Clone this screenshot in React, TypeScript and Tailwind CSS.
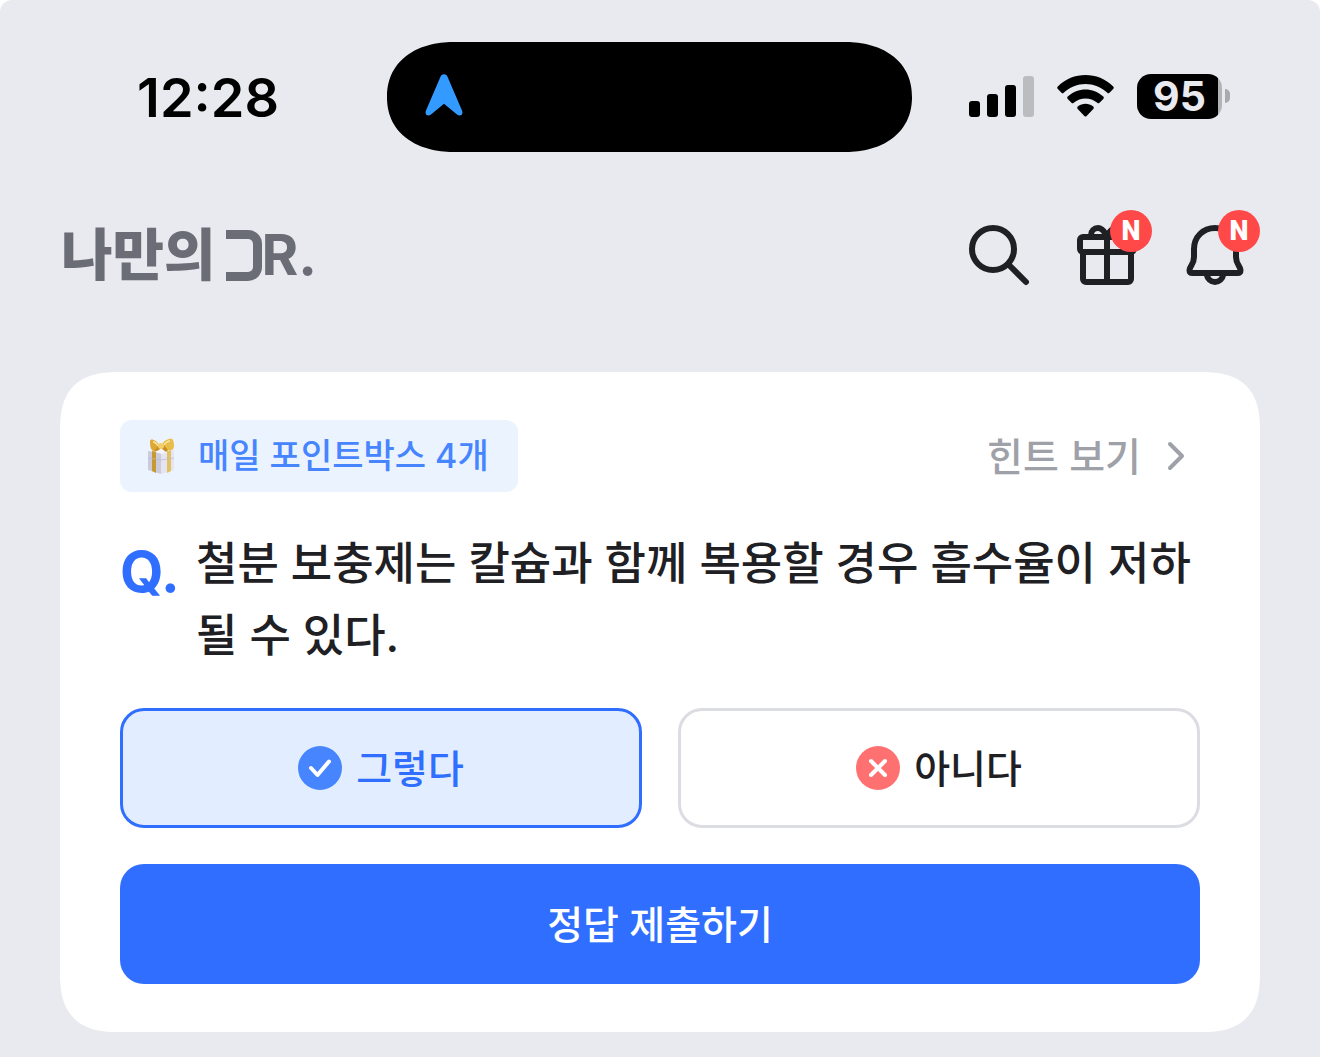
import { useState } from 'react'
import clsx from 'clsx'

type Answer = 'yes' | 'no'

function SignalIcon() {
  return (
    <svg width="65" height="41" viewBox="0 0 65 41" aria-hidden="true">
      <rect x="0" y="25" width="11" height="16" rx="3" />
      <rect x="18" y="18" width="11" height="23" rx="3" />
      <rect x="36" y="9" width="11" height="32" rx="3" />
      <rect x="54" y="0" width="11" height="41" rx="3" fill="#bbbcc0" />
    </svg>
  )
}

function WifiIcon() {
  return (
    <svg width="57" height="42" viewBox="0 0 57 42" aria-hidden="true">
      <path d="M.8 11.5C16-3.8 41-3.8 56.2 11.5q1.2 1.3 0 2.5l-3.7 3.8q-1 1-2.2 0C38 6.2 19 6.2 6.7 17.8q-1.2 1-2.2 0L.8 14q-1.2-1.2 0-2.5Z" />
      <path d="M10.7 21.5C21 12 36 12 46.3 21.5q1.2 1.2 0 2.5l-3.8 3.8q-1 1-2.2 0c-6.8-5.8-16.8-5.8-23.6 0q-1.2 1-2.2 0L10.7 24q-1.2-1.3 0-2.5Z" />
      <path d="M20.7 31.5c4.8-3.7 10.8-3.7 15.6 0q1.2 1.3 0 2.5l-6.7 7q-1.1 1-2.2 0l-6.7-7q-1.2-1.2 0-2.5Z" />
    </svg>
  )
}

function Battery({ level }: { level: number }) {
  return (
    <div className="flex items-center gap-[3px]">
      <div className="flex h-[45px] w-[85px] items-center justify-center rounded-[14px] bg-[linear-gradient(90deg,#000_81px,#b2b3b7_81px)] text-[41px] leading-none font-bold text-[#e9eaef]">
        {level}
      </div>
      <div className="h-[14px] w-[5px] rounded-r-full bg-[#a9aaae]" />
    </div>
  )
}

function StatusBar() {
  return (
    <div className="grid grid-cols-[1fr_525px_1fr] items-center pt-[42px] pr-[21px]">
      <time className="pt-[2px] pr-[108px] text-right text-[54px] leading-none font-semibold text-black">
        12:28
      </time>
      <div className="flex h-[110px] items-center rounded-[68px/55px] bg-black pl-[38px] [corner-shape:superellipse(1.15)]">
        <svg width="38" height="42" viewBox="0 0 38 42" className="mb-1" fill="#339bff" aria-hidden="true">
          <path d="M15.6 2.4C16.8-.6 21.2-.6 22.4 2.4L37 36.5C38.6 40.4 35.6 43 32 40.5L19 29.8 6 40.5C2.4 43-.6 40.4 1 36.5Z" />
        </svg>
      </div>
      <div className="flex items-center justify-end gap-[23px] pr-[69px] pb-[2px]">
        <SignalIcon />
        <WifiIcon />
        <Battery level={95} />
      </div>
    </div>
  )
}

function Logo() {
  return (
    <a href="#" aria-label="나만의 DR." className="flex items-center gap-[10px] text-[#6b6d76]">
      <span className="text-[56px] leading-none font-black">나만의</span>
      <span className="flex items-center">
        <span className="h-[51px] w-[36px] rounded-r-[14px] border-y-[9px] border-r-[9px] border-current" />
        <span className="text-[56px] leading-none font-bold">R.</span>
      </span>
    </a>
  )
}

const iconPaths = {
  search: (
    <>
      <circle cx="30" cy="30" r="21" />
      <path d="m45.5 45.5 17.5 17.5" />
    </>
  ),
  gift: (
    <>
      <rect x="9" y="18" width="54" height="15" rx="3" />
      <path d="M12 33v27a3 3 0 0 0 3 3h42a3 3 0 0 0 3-3V33M36 18v45" />
      <path d="M20 17v-1c0-4 3-7 7-7 5 0 7 5 9 8 2-3 4-8 9-8 4 0 7 3 7 7v1" />
    </>
  ),
  bell: (
    <>
      <path d="M36 9c-12 0-21 9-21 21v8c0 8-4.500 9-4.500 13 0 2 1 3 3 3h45c2 0 3-1 3-3 0-4-4.500-5-4.500-13v-8c0-12-9-21-21-21Z" />
      <path d="M27.500 55c1 5 4.500 8 8.500 8s7.500-3 8.500-8" />
    </>
  ),
}

function IconButton({ icon, label, isNew }: { icon: keyof typeof iconPaths; label: string; isNew?: boolean }) {
  return (
    <button type="button" aria-label={label} className="relative size-[72px]">
      <svg
        viewBox="0 0 72 72"
        className="size-full"
        fill="none"
        stroke="#1f2024"
        strokeWidth="6"
        strokeLinecap="round"
        strokeLinejoin="round"
        aria-hidden="true"
      >
        {iconPaths[icon]}
      </svg>
      {isNew && (
        <span className="absolute -top-[9px] -right-[9px] flex size-[42px] items-center justify-center rounded-full bg-[#ff4848] font-['Roboto',sans-serif] text-[27px] leading-none font-black text-white">
          N
        </span>
      )}
    </button>
  )
}

function GiftBox() {
  return (
    <svg width="30" height="36" viewBox="0 0 30 36" aria-hidden="true">
      <path d="M2 13 15 15v21L2 32Z" fill="#cbcbdc" />
      <path d="m15 15 13-3v20l-13 4Z" fill="#e6e4f0" />
      <path d="m2 12 12-3 15 2-13 5Z" fill="#f5f4fa" />
      <path d="m6 13 4 1v21l-4-2Z" fill="#c79a31" />
      <path d="m21 13 4-1v21l-4 2Z" fill="#e0c263" />
      <path d="M2 20l13 2 13-2" fill="none" stroke="#b9b8cc" strokeWidth=".7" />
      <path d="M14 8C10 1 4 0 4 3s0 8 3 10c4 0 6-2 7-5Z" fill="#dca936" />
      <path d="M15 8c3-7 11-9 12-6s2 8-1 10c-4 1-9-1-11-4Z" fill="#e9bd4b" />
      <path d="M12 7 8 14l5-2 2-2 5 4 2-2-5-6Z" fill="#c88f22" />
      <path d="M7 4c2 0 4 2 5 4M24 3c-2 0-5 2-6 4" fill="none" stroke="#fbe9a4" strokeWidth="1.500" />
      <circle cx="15" cy="8" r="3" fill="#f3cf69" />
    </svg>
  )
}

function AnswerButton({
  answer,
  selected,
  onSelect,
}: {
  answer: Answer
  selected: boolean
  onSelect: (answer: Answer) => void
}) {
  const yes = answer === 'yes'
  return (
    <button
      type="button"
      aria-pressed={selected}
      onClick={() => onSelect(answer)}
      className={clsx(
        'flex h-[120px] items-center justify-center gap-[14px] rounded-3xl border-3 text-[39px] leading-none font-medium',
        selected ? 'border-[#2f6eff] bg-[#e2eeff] text-[#2f6eff]' : 'border-[#dcdde3] bg-white text-[#1f2024]',
      )}
    >
      <svg
        width="44"
        height="44"
        viewBox="0 0 44 44"
        fill="none"
        stroke="#fff"
        strokeWidth="4"
        strokeLinecap="round"
        strokeLinejoin="round"
        aria-hidden="true"
      >
        <circle cx="22" cy="22" r="22" fill={yes ? '#4785ff' : '#ff7171'} stroke="none" />
        <path d={yes ? 'm13 22 6.500 7L31 15.500' : 'm15 15 14 14m0-14L15 29'} />
      </svg>
      {yes ? '그렇다' : '아니다'}
    </button>
  )
}

function QuizCard() {
  const [answer, setAnswer] = useState<Answer>('yes')

  return (
    <section className="flex flex-col gap-9 rounded-[60px] bg-white px-[60px] py-12 [corner-shape:superellipse(1.4)]">
      <div className="flex items-center justify-between">
        <p className="flex h-[72px] items-center gap-[22px] rounded-xl bg-[#ebf3ff] pr-[29px] pl-[26px] text-[34px] leading-none font-medium text-[#4785ff]">
          <GiftBox />
          매일 포인트박스 4개
        </p>
        <a href="#" className="flex items-center gap-[26px] pr-[13px] text-[39px] leading-none font-medium text-[#9fa1a9]">
          힌트 보기
          <svg
            width="20"
            height="30"
            viewBox="0 0 20 30"
            fill="none"
            stroke="currentColor"
            strokeWidth="4"
            strokeLinecap="round"
            strokeLinejoin="round"
            aria-hidden="true"
          >
            <path d="m3 3 12 12L3 27" />
          </svg>
        </a>
      </div>

      <div className="flex leading-[72px]">
        <span className="w-[76px] shrink-0 pt-[8px] text-[56px] font-bold text-[#2f6eff]">Q.</span>
        <h1 className="text-[45px] font-medium text-[#1f2024]">
          철분 보충제는 칼슘과 함께 복용할 경우 흡수율이 저하될 수 있다.
        </h1>
      </div>

      <div className="grid grid-cols-2 gap-9">
        <AnswerButton answer="yes" selected={answer === 'yes'} onSelect={setAnswer} />
        <AnswerButton answer="no" selected={answer === 'no'} onSelect={setAnswer} />
      </div>

      <button
        type="button"
        className="h-[120px] rounded-3xl bg-[#2f6eff] text-[39px] leading-none font-medium text-white"
      >
        정답 제출하기
      </button>
    </section>
  )
}

export default function App() {
  return (
    <div className="min-h-screen rounded-t-xl bg-[#e9eaef] font-['Inter','Noto_Sans_CJK_KR',sans-serif]">
      <StatusBar />
      <header className="flex items-center justify-between pt-[67px] pr-[69px] pl-[61px]">
        <Logo />
        <nav className="flex gap-9">
          <IconButton icon="search" label="검색" />
          <IconButton icon="gift" label="선물" isNew />
          <IconButton icon="bell" label="알림" isNew />
        </nav>
      </header>
      <main className="px-[60px] pt-[81px] pb-6">
        <QuizCard />
      </main>
    </div>
  )
}
